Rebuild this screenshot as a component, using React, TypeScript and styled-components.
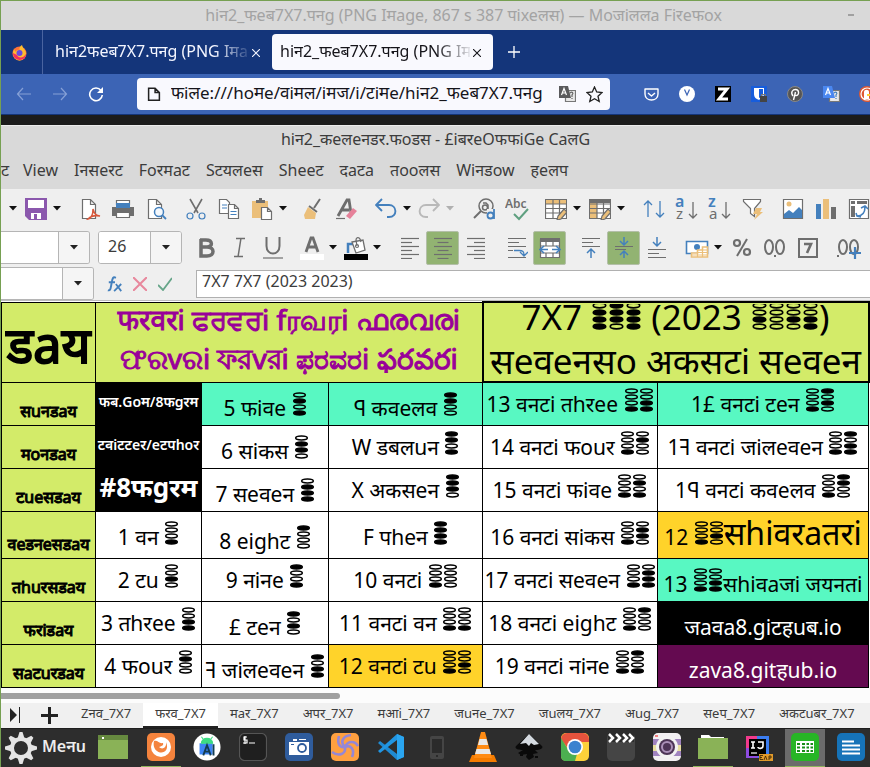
import React from 'react';
import styled, { createGlobalStyle, css } from 'styled-components';

const GlobalStyle = createGlobalStyle`
  * { box-sizing: border-box; }
  body {
    margin: 0;
    background: #2d2d2d;
    font-family: "Noto Sans", "Noto Sans Devanagari", "Open Sans", sans-serif;
    color: #3c3c3c;
  }
  button, input { font-family: inherit; color: inherit; }
  button { border: 0; background: none; padding: 0; margin: 0; }
  svg { display: block; flex: none; }
`;

/* ---------- shared ---------- */

const Desktop = styled.div`
  min-height: 100vh;
  overflow: hidden;
  display: flex;
  flex-direction: column;
  border-left: 1px solid #76a052;
  border-top: 1px solid #76a052;
  white-space: nowrap;
`;

const iconBase = css`
  display: flex;
  align-items: center;
  justify-content: center;
  flex: none;
`;

/* ---------- browser ---------- */

const BrowserTitle = styled.header`
  height: 29px;
  display: grid;
  grid-template-columns: 1fr auto 1fr;
  align-items: center;
  padding: 0 16px 2px 72px;
  background: #d9d9d9;
  color: #a3a3a3;
  font-size: 16px;
`;

const Minimise = styled.button`
  justify-self: end;
  width: 6px;
  height: 2px;
  background: #a0a0a0;
`;

const TabStrip = styled.nav`
  height: 44px;
  display: flex;
  align-items: center;
  background: #14357a;
`;

const HomeTab = styled.button`
  ${iconBase}
  width: 42px;
  height: 44px;
  padding-right: 4px;
  border-right: 1px solid #4a64a0;
`;

const BrowserTab = styled.button<{ $active?: boolean }>`
  flex: none;
  display: flex;
  align-items: center;
  width: ${(p) => (p.$active ? 221 : 229)}px;
  height: 36px;
  padding: 0 12px 2px ${(p) => (p.$active ? 8 : 12)}px;
  border-radius: 4px;
  background: ${(p) => (p.$active ? '#f9f9fe' : 'transparent')};
  color: ${(p) => (p.$active ? '#15141a' : '#f4f6ff')};
  font-size: 16px;
  svg { margin: 4px 0 0 3px; }
`;

const TabLabel = styled.span`
  flex: 1;
  overflow: hidden;
  text-align: left;
  mask-image: linear-gradient(to right, #000 82%, transparent 102%);
`;

const NewTab = styled.button`
  ${iconBase}
  width: 42px;
  height: 36px;
  color: #fff;
`;

const NavBar = styled.div`
  height: 41px;
  display: flex;
  align-items: center;
  background: #3c64b5;
  border-bottom: 1px solid #14357a;
  overflow: hidden;
`;

const NavButton = styled.button<{ $dim?: boolean }>`
  ${iconBase}
  width: 36px;
  height: 32px;
  color: ${(p) => (p.$dim ? '#86a0d6' : '#fff')};
`;

const NavButtons = styled.div`
  display: flex;
  padding-left: 5px;
  width: 136px;
`;

const UrlBox = styled.div`
  flex: 1;
  display: flex;
  align-items: center;
  height: 32px;
  padding: 0 7px 0 10px;
  border-radius: 4px;
  background: #f9f9fe;
  gap: 10px;
`;

const UrlInput = styled.input`
  flex: 1;
  min-width: 0;
  height: 30px;
  padding: 0 0 4px;
  border: 0;
  outline: 0;
  background: transparent;
  color: #15141a;
  font-size: 17px;
`;

const Extensions = styled.div`
  display: flex;
  width: 260px;
  padding-left: 23px;
  overflow: hidden;
`;

const WallpaperStrip = styled.div`
  height: 10px;
  background: #1c1c1c;
`;

/* ---------- office ---------- */

const OfficeHead = styled.header`
  height: 64px;
  background: #d9d9d9;
  border-top: 1px solid #ececec;
`;

const OfficeTitle = styled.h1`
  margin: 0;
  height: 27px;
  line-height: 27px;
  font-size: 16px;
  font-weight: 400;
  text-align: center;
`;

const MenuBar = styled.nav`
  display: flex;
  height: 34px;
  overflow: hidden;
`;

const MenuItem = styled.button<{ $cut?: boolean }>`
  flex: none;
  display: flex;
  justify-content: ${(p) => (p.$cut ? 'flex-end' : 'center')};
  width: ${(p) => (p.$cut ? '11px' : 'auto')};
  padding: 0 ${(p) => (p.$cut ? 6 : 8)}px 0 8px;
  line-height: 34px;
  font-size: 16px;
`;

const ToolArea = styled.section`
  background: #efefef;
  border-bottom: 1px solid #bdbdbd;
`;

const ToolRow = styled.div`
  display: flex;
  align-items: center;
  height: 39px;
  overflow: hidden;
`;

const Tool = styled.button<{ $gap?: number; $on?: boolean }>`
  ${iconBase}
  width: 33px;
  height: 34px;
  margin-left: ${(p) => p.$gap ?? 0}px;
  border: 1px solid ${(p) => (p.$on ? '#b3bfa8' : 'transparent')};
  border-radius: 2px;
  background: ${(p) => (p.$on ? '#92b372' : 'transparent')};
`;

const Drop = styled.button<{ $off?: boolean; $gap?: number }>`
  ${iconBase}
  width: 10px;
  height: 34px;
  margin-left: ${(p) => p.$gap ?? 0}px;
  color: ${(p) => (p.$off ? '#b0b0b0' : '#111')};
`;

const Combo = styled.div<{ $cut?: boolean; $width: number }>`
  flex: none;
  display: flex;
  width: ${(p) => p.$width}px;
  height: 33px;
  margin-right: 8px;
  border: 1px solid #b5b5b5;
  border-left-width: ${(p) => (p.$cut ? 0 : 1)}px;
  border-radius: ${(p) => (p.$cut ? '0 3px 3px 0' : '3px')};
  background: #fff;
  overflow: hidden;
`;

const ComboInput = styled.input`
  flex: 1;
  min-width: 0;
  border: 0;
  outline: 0;
  padding: 0 0 4px 9px;
  font-size: 16px;
`;

const ComboButton = styled.button`
  ${iconBase}
  width: 31px;
  border-left: 1px solid #b5b5b5;
  background: #f5f5f5;
  color: #222;
`;

const FormulaRow = styled.div`
  display: flex;
  align-items: center;
  height: 33px;
`;

const FormulaButton = styled.button`
  ${iconBase}
  width: 25px;
  height: 30px;
`;

const FormulaInput = styled.input`
  flex: 1;
  min-width: 0;
  height: 28px;
  margin-left: 19px;
  padding: 0 5px 5px;
  border: 1px solid #b0b0b0;
  border-right: 0;
  outline: 0;
  font-size: 16px;
  background: #fff;
`;

/* ---------- sheet ---------- */

const SheetArea = styled.main`
  background: #fff;
  padding-right: 1px;
`;

const Sheet = styled.table`
  width: 100%;
  table-layout: fixed;
  border-collapse: collapse;
  color: #000;
  line-height: 30px;
`;

const Row = styled.tr<{ $height: number }>`
  height: ${(p) => p.$height}px;
`;

const fills = {
  lime: ['#d3eb69', '#000'],
  mint: ['#58f8c2', '#000'],
  gold: ['#ffd32a', '#000'],
  black: ['#000', '#fff'],
  plum: ['#640a50', '#fff'],
  white: ['#fff', '#000'],
} as const;
type Fill = keyof typeof fills;

const Cell = styled.td<{ $fill?: Fill; $low?: boolean; $tall?: boolean }>`
  padding: ${(p) => (p.$low ? 8 : 0) + (p.$tall ? 4 : 0)}px 0 0;
  border: 1px solid #000;
  background: ${(p) => fills[p.$fill ?? 'white'][0]};
  color: ${(p) => fills[p.$fill ?? 'white'][1]};
  font-size: 21px;
  text-align: center;
  vertical-align: middle;
  overflow: hidden;
`;

const Big = styled.span`
  font-size: 32px;
`;

const DayHead = styled.th`
  padding: 4px 0 0;
  border: 1px solid #000;
  background: #d3eb69;
  font-size: 50px;
  font-weight: 400;
  line-height: 60px;
  -webkit-text-stroke: 2px currentColor;
`;

const MonthHead = styled.th`
  padding: 0;
  border: 1px solid #000;
  background: #d3eb69;
  color: #990099;
  font-size: 28px;
  font-weight: 400;
  line-height: 39px;
  -webkit-text-stroke: 1px currentColor;
`;

const YearHead = styled.th`
  padding: 0;
  border: 2px solid #000;
  background: #d3eb69;
  font-size: 35px;
  font-weight: 400;
  line-height: 44px;
`;

const TwoLines = styled.div`
  display: flex;
  flex-direction: column;
  justify-content: center;
  align-items: center;
  height: 76px;
  padding-bottom: 6px;
  overflow: hidden;
  span { flex: none; }
`;

const DayName = styled.th<{ $tall?: boolean }>`
  padding: ${(p) => (p.$tall ? 18 : 14)}px 0 0;
  border: 1px solid #000;
  background: #d3eb69;
  font-size: 16px;
  font-weight: 400;
  line-height: 26px;
  -webkit-text-stroke: 1px currentColor;
`;

const Link = styled.td<{ $big?: boolean }>`
  padding: 0 0 4px;
  background: #000;
  color: #fff;
  text-align: center;
  font-weight: ${(p) => (p.$big ? 700 : 600)};
  font-size: ${(p) => (p.$big ? 26 : 14)}px;
  a { color: inherit; text-decoration: none; }
`;

const Dots = styled.svg`
  display: inline-block;
  vertical-align: baseline;
`;

function Bits({ hex, large }: { hex: string; large?: boolean }) {
  const pitch = large ? 17 : 15;
  const step = large ? 7 : 6;
  const w = pitch * hex.length;
  return (
    <Dots width={w} height={step * 4} viewBox={`0 0 ${w} ${step * 4}`}>
      {hex.split('').flatMap((h, c) =>
        [8, 4, 2, 1].map((bit, r) => (
          <ellipse
            key={`${c}-${r}`}
            cx={pitch * c + pitch / 2}
            cy={step * r + step / 2}
            rx={large ? 6.2 : 5.8}
            ry={large ? 2.3 : 1.9}
            fill={parseInt(h, 16) & bit ? 'currentColor' : 'none'}
            stroke="currentColor"
            strokeWidth={large ? 1.7 : 1.5}
          />
        )),
      )}
    </Dots>
  );
}

const ScrollTrack = styled.div`
  height: 15px;
  padding-top: 5px;
  background: #fcfcfc;
`;

const ScrollThumb = styled.div`
  width: 39%;
  height: 6px;
  border-radius: 0 3px 3px 0;
  background: #a0a0a0;
`;

const SheetTabs = styled.nav`
  display: flex;
  height: 25px;
  background: #f0f0f0;
  overflow: hidden;
`;

const SheetTab = styled.button<{ $active?: boolean }>`
  flex: none;
  padding: 0 12px 2px;
  font-size: 13px;
  line-height: 20px;
  background: ${(p) => (p.$active ? '#fff' : 'transparent')};
  border-bottom: 2px solid ${(p) => (p.$active ? '#222' : 'transparent')};
`;

const SheetTool = styled.button<{ $wide?: boolean }>`
  ${iconBase}
  width: ${(p) => (p.$wide ? 40 : 28)}px;
  color: #222;
`;

/* ---------- panel ---------- */

const Panel = styled.footer`
  display: flex;
  flex: 1;
  min-height: 40px;
  background: #2d2d2d;
  border-top: 1px solid #1e1e1e;
  overflow: hidden;
`;

const StartButton = styled.button`
  flex: none;
  display: flex;
  align-items: center;
  width: 92px;
  padding: 0 0 0 4px;
  gap: 5px;
  color: #eee;
  font-size: 16px;
  font-weight: 600;
  span { padding-bottom: 4px; }
`;

const Launcher = styled.button<{ $open?: boolean; $focus?: boolean; $gap?: number }>`
  ${iconBase}
  width: 40px;
  margin-right: ${(p) => p.$gap ?? 6}px;
  border-bottom: 2px solid ${(p) => (p.$open ? '#8fb35c' : 'transparent')};
  background: ${(p) => (p.$focus ? '#6b6b6b' : 'transparent')};
`;

/* ---------- icons ---------- */

const G = '#6e6e6e';
const B = '#4480bd';
const O = '#ebbf7a';

function Svg({ s = 22, vb = 22, children }: { s?: number; vb?: number; children: React.ReactNode }) {
  return (
    <svg width={s} height={s} viewBox={`0 0 ${vb} ${vb}`} fill="none" strokeWidth="1.2" aria-hidden="true">
      {children}
    </svg>
  );
}

const Caret = () => (
  <svg width="8" height="5" viewBox="0 0 8 5" fill="currentColor"><path d="M0 0h8L4 4.4z" /></svg>
);

const Close = () => (
  <svg width="8" height="8" viewBox="0 0 8 8" stroke="currentColor" strokeWidth="1.1"><path d="M0 0l8 8M8 0L0 8" /></svg>
);

const page = 'M3.5 1.5h8l5 5v14h-13zM11.5 1.5v5h5';
const arrowUp = 'M5 19V3M1 7l4-4 4 4';
const down = 'M5 3v16M1 15l4 4 4-4';

const SaveIcon = () => (
  <Svg><path d="M0 0h22v22H4l-4-4z" fill="#8b58ad" /><path d="M3 2h16v8H3zM6 15h10v6H6z" fill="#fff" /><path d="M9 16h3v5H9z" fill="#8b58ad" /></Svg>
);
const PdfIcon = () => (
  <Svg><path d={page} fill="#fff" stroke={G} /><path d="M9 21c4-1 5-6 5-10 1 4 3 7 7 7-5-1-9 0-12 3z" fill="#efefef" stroke="#d8583b" strokeWidth="1.5" /></Svg>
);
const PrintIcon = () => (
  <Svg><path d="M4.500 7V2.500h13V7" fill="#fff" stroke={G} /><path d="M0 9h22v9H0z" fill={G} /><path d="M4 5h14v5H4z" fill={B} /><path d="M4.500 14.500h13v5h-13z" fill="#fff" stroke={G} /></Svg>
);
const PreviewIcon = () => (
  <Svg><path d={page} fill="#fff" stroke={G} /><circle cx="14" cy="14" r="4.500" fill="#f4f8fc" stroke={B} strokeWidth="1.500" /><path d="M17 17l4 4" stroke={B} strokeWidth="1.800" /></Svg>
);
const CutIcon = () => (
  <Svg><path d="M5 1l8 14M17 1L9 15" stroke={G} strokeWidth="1.600" /><circle cx="5" cy="18" r="3" stroke={B} /><circle cx="17" cy="18" r="3" stroke={B} /></Svg>
);
const CopyIcon = () => (
  <Svg><path d="M1.500 1.500h7l3 3v11h-10z" fill="#fff" stroke={G} /><path d="M4 7h5M4 10h5" stroke={B} /><path d="M10.500 6.500h6l4 4v10h-10zM16.500 6.500v4h4" fill="#fff" stroke={G} /><path d="M12.500 13.500h6M12.500 16.500h6" stroke={B} /></Svg>
);
const PasteIcon = () => (
  <Svg><path d="M1 3h16v17H1z" fill={O} /><path d="M5 5V2h3V0h3v2h3v3z" fill={G} /><path d="M10.500 9.500h6l4 4v8h-10zM16.500 9.500v4h4" fill="#fff" stroke={G} /></Svg>
);
const BrushIcon = () => (
  <Svg><path d="M18 1l-6 9M7 8l8 6" stroke={G} strokeWidth="2" /><path d="M6 9l8 6-1 6H3l-1-4z" fill={O} /></Svg>
);
const ClearIcon = () => (
  <Svg><path d="M3 18L12 2h2l2 13M6 12h8" stroke={G} strokeWidth="2.800" /><path d="M1 20.500h9" stroke={G} /><path d="M18 10l4 3-7 8-4-3z" fill="#e6829a" /></Svg>
);
const UndoIcon = ({ off }: { off?: boolean }) => (
  <Svg>
    <path
      d={off ? 'M20 7H8c-8 0-9 12 0 12h2M15 1l6 6-6 6' : 'M2 7h12c8 0 9 12 0 12h-2M7 1L1 7l6 6'}
      stroke={off ? '#b9b9b9' : B}
      strokeWidth="1.900"
    />
  </Svg>
);
const FindIcon = () => (
  <Svg><circle cx="13" cy="8" r="7" stroke={G} strokeWidth="1.500" /><path d="M8 13l-7 7" stroke={G} strokeWidth="2" /><circle cx="12" cy="9.500" r="2.500" stroke={G} strokeWidth="1.500" /><path d="M10 5h3l2 2v5" stroke={G} strokeWidth="1.500" /><path d="M14 11h8v10h-8z" fill="#efefef" /><circle cx="17.500" cy="17.500" r="3" stroke={B} strokeWidth="1.800" /><path d="M21 11v10" stroke={B} strokeWidth="1.800" /></Svg>
);
const SmallText = styled.text`
  font-family: "Noto Sans", sans-serif;
`;
const AbcIcon = () => (
  <Svg s={24} vb={24}><SmallText x="0" y="11" fontSize="12" fontWeight="600" fill={G}>Abc</SmallText><path d="M9 17l5 5 9-10" stroke="#5fa080" strokeWidth="2" /></Svg>
);
const TableIcon = ({ cols }: { cols?: boolean }) => (
  <Svg>
    <path d="M.5 1.500h21v19H.5z" fill="#fff" stroke={G} />
    <path d={cols ? 'M1 5h7v15H1z' : 'M1 2h20v4H1z'} fill={O} />
    {cols && <path d="M0 1h22v4H0z" fill={G} />}
    <path d="M.5 6h21M.5 10.500h21M.5 15h21M8 2v18M14.500 2v18" stroke={G} />
    <path d="M19 11l3 3-6 7-4 1 1-4z" fill={O} stroke={G} />
  </Svg>
);
const SortIcon = () => (
  <Svg><path d={arrowUp} stroke={B} strokeWidth="1.300" /><g transform="translate(12 0)"><path d={down} stroke={B} strokeWidth="1.300" /></g></Svg>
);
const SortAz = ({ a, b }: { a: string; b: string }) => (
  <Svg s={24} vb={24}><SmallText x="0" y="10" fontSize="16" fontWeight="600" fill={B}>{a}</SmallText><SmallText x="1" y="22" fontSize="15" fill={G}>{b}</SmallText><g transform="translate(13 2)"><path d={down} stroke={G} strokeWidth="1.300" /></g></Svg>
);
const FilterIcon = () => (
  <Svg><path d="M1.500 1.500h17v2l-6 7v8l-4-3v-5l-7-7z" fill="#fff" stroke={G} /><path d="M14 10h6l-2 4h3l-9 8 3-6h-4z" fill={O} /></Svg>
);
const ImageIcon = () => (
  <Svg><path d="M1.500 1.500h19v19h-19z" fill="#fff" stroke={G} /><circle cx="7" cy="6" r="2.500" fill={O} /><path d="M2 20v-4l5-4 4 3 6-6 3 3v8z" fill={B} /></Svg>
);
const BarsIcon = () => (
  <Svg><path d="M1 6h5v15H1z" fill={B} /><path d="M8 1h6v20H8z" fill={O} /><path d="M16 9h5v12h-5z" fill={G} /></Svg>
);
const PivotIcon = () => (
  <Svg><path d="M1.500 1.500h19v19h-19z" fill="#fff" stroke={G} /><path d="M3 3h4v3H3zM9 3h10v3H9zM3 8h4v11H3z" fill={G} /><path d="M8 15l1 3 4 1M9 18c6 0 8-4 8-9M13 10l4-2 3 3" stroke={B} strokeWidth="1.600" /></Svg>
);
const LetterIcon = ({ kind }: { kind: 'B' | 'I' | 'U' }) => (
  <Svg>
    {kind === 'B' && <path d="M4 3h6c7 0 7 7 1 7H5h6c8 0 8 9 0 9H5V2" stroke={G} strokeWidth="3.500" />}
    {kind === 'I' && <path d="M7 1.500h9M5 19.500h9M12 1L9 20" stroke={G} strokeWidth="1.500" />}
    {kind === 'U' && <path d="M4.500 0v9c0 10 13 10 13 0V0" stroke={G} strokeWidth="2" />}
    {kind === 'U' && <path d="M1 21h20" stroke={G} />}
  </Svg>
);
const FontColour = () => (
  <Svg s={24} vb={24}><path d="M6 16L11 2h2l5 14M8 11h8" stroke={G} strokeWidth="2.800" /><path d="M0 18h24v6H0z" fill="#fff" /></Svg>
);
const BucketIcon = () => (
  <Svg s={24} vb={24}><path d="M4 17V8h5" stroke={B} strokeWidth="2.500" /><path d="M8 6l11-2 2 10-9 3z" fill="#fff" stroke={G} strokeWidth="1.300" /><path d="M13 10l-1-6c0-3 3-3 4-1l1 3" stroke={G} strokeWidth="1.300" /><circle cx="13" cy="10" r="1.500" stroke={G} /><path d="M0 18h24v6H0z" fill="#000" /></Svg>
);
const LinesIcon = ({ align }: { align: 'l' | 'c' | 'r' }) => {
  const widths = [18, 11, 18, 11, 18, 11];
  return (
    <Svg>
      {widths.map((w, i) => {
        const x = align === 'l' ? 2 : align === 'r' ? 20 - w : 11 - w / 2;
        return <path key={i} d={`M${x} ${1.500 + i * 4}h${w}`} stroke={G} />;
      })}
    </Svg>
  );
};
const WrapIcon = () => (
  <Svg><path d="M2 1.500h18M2 5.500h11M2 9.500h18M2 13.500h5M2 20.500h18" stroke={G} /><path d="M8 13.500h5c4 0 5 1 5 5M14 15l4 4 4-4" stroke={B} strokeWidth="1.300" /></Svg>
);
const MergeIcon = () => (
  <Svg><path d="M1.500 2.500h19v18h-19z" fill="#fff" stroke={G} /><path d="M1 1h20v4H1z" fill={G} /><path d="M1.500 9h19M1.500 16h19M7 5v4M14 5v4M7 16v5M14 16v5" stroke={G} /><path d="M1 12.500h8M5 9l-4 3.500L5 16M21 12.500h-8M17 9l4 3.500-4 3.500" stroke={B} strokeWidth="1.600" /></Svg>
);
const VertIcon = ({ at }: { at: 't' | 'm' | 'b' }) => (
  <Svg>
    {at === 't' && <><path d="M2 1.500h18M2 5.500h11M2 9.500h18" stroke={G} /><path d="M11 21v-9M7 16l4-4 4 4" stroke={B} strokeWidth="1.500" /></>}
    {at === 'm' && <><path d="M2 9.500h18M2 12.500h11" stroke={G} /><path d="M11 0v7M7 4l4 4 4-4M11 21v-6M7 18l4-4 4 4" stroke={B} strokeWidth="1.500" /></>}
    {at === 'b' && <><path d="M2 12.500h18M2 16.500h11M2 20.500h18" stroke={G} /><path d="M11 0v9M7 5l4 4 4-4" stroke={B} strokeWidth="1.500" /></>}
  </Svg>
);
const MoneyIcon = () => (
  <Svg s={24} vb={24}><path d="M1.500 5.500h21v12h-21z" fill="#fff" stroke={B} strokeWidth="1.600" /><circle cx="12" cy="11" r="3" fill={B} /><path d="M6.500 21v-4h6v-3h5v-3h5v10z" fill="#fff" stroke={O} strokeWidth="1.600" /><path d="M12.500 17v4M17.500 14v7M7 19h15M13 16.500h9M18 14h4" stroke={O} /></Svg>
);
const PercentIcon = () => (
  <Svg><circle cx="6" cy="6" r="3" stroke={G} strokeWidth="2.200" /><circle cx="16" cy="15" r="3" stroke={G} strokeWidth="2.200" /><path d="M16 2L6 19" stroke={G} strokeWidth="2" /></Svg>
);
const ZerosIcon = ({ plus }: { plus?: boolean }) => (
  <Svg s={26} vb={26}><ellipse cx="7" cy="12" rx="4" ry="7" stroke={G} strokeWidth="2" /><ellipse cx="18" cy="12" rx="4" ry="7" stroke={G} strokeWidth="2" /><path d={plus ? 'M1 20h2v2H1z' : 'M12 20h2v2h-2z'} fill={G} />{plus && <path d="M13 18h12M19 12v12" stroke={B} strokeWidth="2.200" />}</Svg>
);
const DateIcon = () => (
  <Svg><path d="M2 2h18v18H2z" stroke={G} strokeWidth="2" /><path d="M7 7h7l-4 9" stroke={G} strokeWidth="2.600" /></Svg>
);

const Firefox = () => (
  <Svg s={17} vb={17}><circle cx="8.500" cy="9.500" r="7" fill="#ff7139" /><path d="M3 4c0 2-1 3-1 6a6.500 6.500 0 0 0 13 0c0-4-3-5-4-9-3 2-3 4-2 5-3-1-4 1-4 2-1-1-2-2-2-4z" fill="#ffbd2e" /><path d="M2 9c0 9 13 9 13 1-3 5-8 4-9 1z" fill="#f2305f" /><circle cx="8.500" cy="9" r="3" fill="#6b4be0" /></Svg>
);
const Translate = ({ blue }: { blue?: boolean }) => (
  <Svg s={17} vb={17}><path d="M6.500 4.500h10v11h-10z" fill="#e8e8e8" stroke="#777" /><path d="M0 0h9l3 12H0z" fill={blue ? '#4a87f0' : '#5a5a5c'} /><path d="M2.500 9L5 2.500 7.500 9M3.500 7h3" stroke="#fff" /><path d="M11 7c2-2 4 0 2 2v2M13 12v1" stroke={blue ? B : '#666'} /></Svg>
);

/* ---------- taskbar icon set ---------- */

const Tile = ({ fill, children }: { fill: string; children: React.ReactNode }) => (
  <Svg s={28} vb={28}><rect width="28" height="28" rx="5" fill={fill} />{children}</Svg>
);
const Folder = ({ tab }: { tab?: boolean }) => (
  <Svg s={30} vb={30}>{tab ? <><path d="M3 3h8l2 2h13v4H3z" fill="#fff" /><path d="M0 6h30v21H0z" fill="#8ab257" /></> : <><path d="M0 3h30v24H0z" fill="#8ab257" /><path d="M0 3h30v5H0z" fill="#66893f" /><path d="M4 5h2v2H4z" fill="#fff" /></>}</Svg>
);
const Gear = () => (
  <Svg s={32} vb={32}>
    {[0, 45, 90, 135, 180, 225, 270, 315].map((a) => (
      <path key={a} d="M12 8L14.500 0h3L20 8z" fill="#e4e4e4" transform={`rotate(${a} 16 16)`} />
    ))}
    <circle cx="16" cy="16" r="9" fill="#2d2d2d" stroke="#e4e4e4" strokeWidth="4" />
  </Svg>
);

const launchers: { name: string; icon: React.ReactNode; open?: boolean; focus?: boolean; gap?: number }[] = [
  { name: 'Desktop', gap: 8, icon: <Folder /> },
  { name: 'Firefox', open: true, icon: <Tile fill="#f4833d"><circle cx="14" cy="14" r="10" fill="#fff" /><path d="M7 8c4-1 5 3 9 2 1 3-2 3-4 4 3 3 8 1 7-5 4 9-4 13-9 9-3-2-4-6-3-10z" fill="#f4833d" /></Tile> },
  { name: 'Android Studio', icon: <Svg s={28} vb={30}><circle cx="15" cy="15" r="14.500" fill="#fff" /><path d="M7 11h14v12H7z" fill="#3d85f5" /><path d="M9 11c0-7 12-7 12 0zM9 4l3 4M21 4l-3 4" fill="#3ddc84" stroke="#3ddc84" /><path d="M11 24l4-11 4 11M13 20h4M22 12v12" stroke="#143c50" strokeWidth="2" /></Svg> },
  { name: 'Terminal', icon: <Tile fill="#1f1f1f"><rect x=".5" y=".5" width="27" height="27" rx="5" stroke="#555" /><path d="M8 4H5v3h3v3H4M6 3v8M10 10h6" stroke="#fff" /></Tile> },
  { name: 'Camera', icon: <Tile fill="#2f5c9c"><path d="M4 9h20v13H4zM8 6h4v2H8zM14 6h7v1h-7z" fill="#fff" /><circle cx="17" cy="15" r="4" stroke="#2f5c9c" strokeWidth="1.800" /><path d="M6 11h3v1H6z" fill="#2f5c9c" /></Tile> },
  { name: 'Swirl', icon: <Tile fill="#ffa040"><path d="M14 14c-5-4-3-11 6-12M14 14c6-3 10 3 7 10M14 14c1 7-6 10-13 5M14 14c-6 1-8-4-6-11M14 14c3-7 10-6 13-1" stroke="#9487d6" strokeWidth="2.600" /></Tile> },
  { name: 'Code', icon: <Svg s={28} vb={28}><path d="M20 1l7 3v20l-7 3L1 10l2-2 17 13z" fill="#1f8ad2" /><path d="M20 1v6L3 20l-2-2z" fill="#2196e3" /><path d="M20 1l7 3v20l-7 3z" fill="#2aa5f0" /></Svg> },
  { name: 'Phone', icon: <Svg s={28} vb={28}><rect x="7" y="3" width="14" height="23" rx="2" fill="#454545" /><path d="M9 6h10v14H9z" fill="#2b2b2b" /><circle cx="14" cy="23" r="1" fill="#222" /></Svg> },
  { name: 'Media player', icon: <Svg s={30} vb={30}><path d="M4 23h22l3 7H1z" fill="#f57c00" /><path d="M13 0h4l7 26H6z" fill="#ff8b13" /><path d="M11.500 7h7l1.600 6H10zM8.500 17h13l1.500 5H7z" fill="#e8e8e8" /></Svg> },
  { name: 'Vector drawing', icon: <Svg s={28} vb={28}><path d="M14 1l13 12c2 3-4 4-7 4l3 3-5 1 1 3-5 3-3-3 1-3-6 1-3-2 5-3c-4 0-9-1-7-4z" fill="#0a0a0a" /><path d="M14 1l10 10-5 1-3-2-2 3-3-3-6 1z" fill="#d4dae0" /><path d="M5 22h3M20 24h3" stroke="#0a0a0a" strokeWidth="2" /></Svg> },
  { name: 'Chrome', icon: <Tile fill="#fdd13a"><path d="M0 6a6 6 0 0 1 6-6h16a6 6 0 0 1 6 6v3H14L8 17z" fill="#e5533d" /><path d="M0 5l8 13 8 3-2 7H5c-3 0-5-2-5-5z" fill="#4caf50" /><circle cx="14" cy="14" r="8" fill="#fff" /><circle cx="14" cy="14" r="6.300" fill="#3a82cf" /></Tile> },
  { name: 'Video', icon: <Tile fill="#454545"><path d="M1 0h26v9H1z" fill="#2d2d2d" /><path d="M2 1l4 4-4 4M9 1l4 4-4 4M16 1l4 4-4 4M22 1l4 4-4 4" stroke="#fff" strokeWidth="2.500" /></Tile> },
  { name: 'Photo', icon: <Tile fill="#f2f0f2"><path d="M0 6h28v6H0zM0 18h28v5H0z" fill="#a083bf" /><path d="M0 12h28v6H0z" fill="#e8dfa0" /><circle cx="14" cy="14" r="11" fill="#f3f3f3" /><circle cx="14" cy="14" r="8" fill="#4d3557" /><circle cx="14" cy="14" r="5" stroke="#ab91b9" strokeWidth="2" /><path d="M2 2h3v2H2z" fill="#f08080" /></Tile> },
  { name: 'Files', open: true, icon: <Folder tab /> },
  { name: 'IDE', icon: <Svg s={28} vb={28}><path d="M1 3h12v22H1z" fill="#f13a8c" /><path d="M12 3h12v22H12z" fill="#3b7df0" /><path d="M1 15h12v10H1z" fill="#8f4ce0" /><path d="M4 6h17v17H4z" fill="#000" /><path d="M6 9h4M8 9v6M6 15h4M13 9h5v4c0 3-5 3-5 1" stroke="#fff" strokeWidth="1.600" /><path d="M6 20h6" stroke="#fff" /><path d="M14 21h14v7H14z" fill="#e09a2b" /><path d="M18 22.500h-3v4h3M15 24.500h2M19 27l1.500-4 1.500 4M24 27v-4h2v2h-2" stroke="#2d1c00" strokeWidth=".8" /></Svg> },
  { name: 'Calc', open: true, focus: true, icon: <Tile fill="#27b526"><path d="M5 8h18v12H5z" fill="#fff" /><path d="M6 10h3v2H6zM11 10h3v2h-3zM15.500 10h2.500v2h-2.500zM19.500 10h2.500v2h-2.500zM6 13.500h3v2H6zM11 13.500h3v2h-3zM15.500 13.500h2.500v2h-2.500zM19.500 13.500h2.500v2h-2.500zM6 17h3v2H6zM11 17h3v2h-3zM15.500 17h2.500v2h-2.500zM19.500 17h2.500v2h-2.500z" fill="#188d18" /></Tile> },
  { name: 'Writer', icon: <Tile fill="#1673b8"><path d="M5 8.500h12M5 12.500h18M5 16.500h18M5 20.500h18" stroke="#fff" strokeWidth="1.800" /></Tile> },
];

/* ---------- data ---------- */

type Entry = { n: string; hex?: string; after?: string; big?: boolean; fill?: Fill; low?: boolean };

const days = ['सuनडaय', 'मoनडaय', 'टueसडaय', 'वeडनeसडaय', 'तhuरसडaय', 'फरiडaय', 'सaटuरडaय'];
const heights = [43, 43, 43, 47, 43, 43, 43];

const weeks: Entry[][] = [
  [
    { n: '5 फiवe', hex: '5', fill: 'mint', low: true },
    { n: 'ꟼ कवeलव', hex: 'C', fill: 'mint', low: true },
    { n: '13 वनटi तhरee', hex: '13', fill: 'mint' },
    { n: '1£ वनटi टeन', hex: '1A', fill: 'mint' },
  ],
  [
    { n: '6 सiकस', hex: '6', low: true },
    { n: 'W डबलuन', hex: 'D' },
    { n: '14 वनटi फouर', hex: '14' },
    { n: '1ꟻ वनटi जiलeवeन', hex: '1B' },
  ],
  [
    { n: '7 सeवeन', hex: '7', low: true },
    { n: 'X अकसeन', hex: 'E' },
    { n: '15 वनटi फiवe', hex: '15' },
    { n: '1ꟼ वनटi कवeलव', hex: '1C' },
  ],
  [
    { n: '1 वन', hex: '1' },
    { n: '8 eighट', hex: '8', low: true },
    { n: 'F पheन', hex: 'F' },
    { n: '16 वनटi सiकस', hex: '16' },
    { n: '12', hex: '12', after: 'सhiवरaतरi', big: true, fill: 'gold' },
  ],
  [
    { n: '2 टu', hex: '2' },
    { n: '9 नiनe', hex: '9' },
    { n: '10 वनटi', hex: '10' },
    { n: '17 वनटi सeवeन', hex: '17' },
    { n: '13', hex: '13', after: 'सhiवaजi जयनतi', fill: 'mint', low: true },
  ],
  [
    { n: '3 तhरee', hex: '3' },
    { n: '£ टeन', hex: 'A', low: true },
    { n: '11 वनटi वन', hex: '11' },
    { n: '18 वनटi eighट', hex: '18' },
    { n: 'जaवa8.giटहuब.io', fill: 'black', low: true },
  ],
  [
    { n: '4 फouर', hex: '4' },
    { n: 'ꟻ जiलeवeन', hex: 'B', low: true },
    { n: '12 वनटi टu', hex: '12', fill: 'gold' },
    { n: '19 वनटi नiनe', hex: '19' },
    { n: 'zava8.gitहub.io', fill: 'plum', low: true },
  ],
];

const links = ['फब.Goम/8फgरम', 'टवiटटeर/eटपhoर', '#8फgरम'];
const menus = ['ट', 'View', 'Iनसeरट', 'Foरमaट', 'Sटयलeस', 'Sheeट', 'दaटa', 'तooलस', 'Wiनडow', 'हeलप'];
const sheets = ['Zनव', 'फरव', 'मaर', 'अपर', 'मआi', 'जuनe', 'जuलय', 'अug', 'सeप', 'अकटuबर'];

export default function App() {
  return (
    <>
      <GlobalStyle />
      <Desktop>
        <BrowserTitle>
          <span />
          <span>hiन2_फeब7X7.पनg (PNG Iमage, 867 s 387 पixeलस) — Moजiललa Fiरeफox</span>
          <Minimise aria-label="Minimise" />
        </BrowserTitle>
        <TabStrip>
          <HomeTab aria-label="Firefox view"><Firefox /></HomeTab>
          <BrowserTab><TabLabel>hiन2फeब7X7.पनg (PNG Iमage)</TabLabel><Close /></BrowserTab>
          <BrowserTab $active><TabLabel>hiन2_फeब7X7.पनg (PNG Iमage)</TabLabel><Close /></BrowserTab>
          <NewTab aria-label="New tab"><svg width="12" height="12" viewBox="0 0 12 12" stroke="currentColor" strokeWidth="1.300"><path d="M6 0v12M0 6h12" /></svg></NewTab>
        </TabStrip>
        <NavBar>
          <NavButtons>
            <NavButton $dim aria-label="Back"><Svg s={16} vb={16}><path d="M15 8H1.500M7 2L1.500 8 7 14" stroke="currentColor" /></Svg></NavButton>
            <NavButton $dim aria-label="Forward"><Svg s={16} vb={16}><path d="M1 8h13.500M9 2l5.500 6L9 14" stroke="currentColor" /></Svg></NavButton>
            <NavButton aria-label="Reload"><Svg s={16} vb={16}><path d="M13 4.500A6.300 6.300 0 1 0 14.300 9" stroke="currentColor" strokeWidth="1.600" /><path d="M15 1v6H9z" fill="currentColor" /></Svg></NavButton>
          </NavButtons>
          <UrlBox>
            <Svg s={14} vb={13}><path d="M1.500 1.200h6l4 4v7h-10zM7.500 1v4h4" stroke="#222" strokeWidth="1.400" /></Svg>
            <UrlInput aria-label="Address" defaultValue="फiलe:///hoमe/वiमल/iमज/i/टiमe/hiन2_फeब7X7.पनg" />
            <Translate />
            <Svg s={17} vb={17}><path d="M8.500 1l2.200 5 5.300.5-4 3.700 1.200 5.300-4.700-2.800-4.700 2.800L5 10.200 1 6.500 6.300 6z" stroke="#222" strokeWidth="1.300" /></Svg>
          </UrlBox>
          <Extensions>
            <NavButton aria-label="Pocket"><Svg s={15} vb={15}><path d="M1 2h13v5c0 8-13 8-13 0zM4 6l3.500 3L11 6" stroke="#fff" strokeWidth="1.400" strokeLinejoin="round" /></Svg></NavButton>
            <NavButton aria-label="V"><Svg s={16} vb={16}><circle cx="8" cy="8" r="8" fill="#fff" /><path d="M5.500 3.500L8 9l2.500-5.500" stroke="#3c64b5" /></Svg></NavButton>
            <NavButton aria-label="Z"><Svg s={16} vb={16}><path d="M0 0h16v16H0z" fill="#000" /><path d="M3 3h9L4 13h9" stroke="#fff" strokeWidth="3" /></Svg></NavButton>
            <NavButton aria-label="Passwords"><Svg s={16} vb={16}><path d="M0 0h16v16H0z" fill="#175ddc" /><path d="M3 2h10v6c0 4-4 5-5 6-2-1-5-2-5-6z" fill="#fff" /><path d="M8 3h4v5c0 2-2 3-4 4z" fill="#175ddc" /><path d="M9 10h7v6H9z" fill="#444" /><path d="M10.500 10V8.500h4V10" stroke="#777" /></Svg></NavButton>
            <NavButton aria-label="Pinterest"><Svg s={16} vb={16}><circle cx="8" cy="8" r="7.500" fill="#555" stroke="#888" strokeWidth="1" /><path d="M6 10C3 6 6 3.500 8.500 3.500c4 0 4 6 .5 6-1 0-1.500-.5-1.500-.5M8.500 6L6.500 14" stroke="#fff" strokeWidth="1.400" /></Svg></NavButton>
            <NavButton aria-label="Translate"><Translate blue /></NavButton>
            <NavButton aria-label="Search"><Svg s={16} vb={16}><circle cx="8" cy="8" r="8" fill="#de5833" /><circle cx="8" cy="8" r="6" stroke="#fff" /><path d="M5 13V6c0-3 5-3 5 0v7z" fill="#fff" /><path d="M8 8h4v2H8z" fill="#fc3" /></Svg></NavButton>
          </Extensions>
        </NavBar>
        <WallpaperStrip />

        <OfficeHead>
          <OfficeTitle>hiन2_कeलeनडर.फoडस - £iबरeOफफiGe CaलG</OfficeTitle>
          <MenuBar>
            {menus.map((m, i) => <MenuItem key={m} $cut={i === 0}>{m}</MenuItem>)}
          </MenuBar>
        </OfficeHead>

        <ToolArea>
          <ToolRow>
            <Drop $gap={7} aria-label="Open recent"><Caret /></Drop>
            <Tool $gap={1} aria-label="Save"><SaveIcon /></Tool><Drop aria-label="Save options"><Caret /></Drop>
            <Tool $gap={11} aria-label="Export PDF"><PdfIcon /></Tool>
            <Tool aria-label="Print"><PrintIcon /></Tool>
            <Tool aria-label="Preview"><PreviewIcon /></Tool>
            <Tool $gap={7} aria-label="Cut"><CutIcon /></Tool>
            <Tool aria-label="Copy"><CopyIcon /></Tool>
            <Tool aria-label="Paste"><PasteIcon /></Tool><Drop aria-label="Paste options"><Caret /></Drop>
            <Tool $gap={8} aria-label="Clone formatting"><BrushIcon /></Tool>
            <Tool aria-label="Clear formatting"><ClearIcon /></Tool>
            <Tool $gap={7} aria-label="Undo"><UndoIcon /></Tool><Drop aria-label="Undo list"><Caret /></Drop>
            <Tool aria-label="Redo"><UndoIcon off /></Tool><Drop $off aria-label="Redo list"><Caret /></Drop>
            <Tool $gap={12} aria-label="Find"><FindIcon /></Tool>
            <Tool aria-label="Spelling"><AbcIcon /></Tool>
            <Tool $gap={6} aria-label="Rows"><TableIcon /></Tool><Drop aria-label="Row options"><Caret /></Drop>
            <Tool $gap={1} aria-label="Columns"><TableIcon cols /></Tool><Drop aria-label="Column options"><Caret /></Drop>
            <Tool $gap={11} aria-label="Sort"><SortIcon /></Tool>
            <Tool aria-label="Sort ascending"><SortAz a="a" b="z" /></Tool>
            <Tool aria-label="Sort descending"><SortAz a="z" b="a" /></Tool>
            <Tool aria-label="Filter"><FilterIcon /></Tool>
            <Tool $gap={7} aria-label="Image"><ImageIcon /></Tool>
            <Tool aria-label="Chart"><BarsIcon /></Tool>
            <Tool aria-label="Pivot table"><PivotIcon /></Tool>
          </ToolRow>
          <ToolRow>
            <Combo $cut $width={89}><ComboInput aria-label="Font name" /><ComboButton aria-label="Choose font"><Caret /></ComboButton></Combo>
            <Combo $width={84}><ComboInput aria-label="Font size" defaultValue="26" /><ComboButton aria-label="Choose size"><Caret /></ComboButton></Combo>
            <Tool aria-label="Bold"><LetterIcon kind="B" /></Tool>
            <Tool aria-label="Italic"><LetterIcon kind="I" /></Tool>
            <Tool aria-label="Underline"><LetterIcon kind="U" /></Tool>
            <Tool $gap={6} aria-label="Font colour"><FontColour /></Tool><Drop aria-label="Font colours"><Caret /></Drop>
            <Tool $gap={1} aria-label="Fill colour"><BucketIcon /></Tool><Drop aria-label="Fill colours"><Caret /></Drop>
            <Tool $gap={11} aria-label="Align left"><LinesIcon align="l" /></Tool>
            <Tool $on aria-label="Align centre"><LinesIcon align="c" /></Tool>
            <Tool aria-label="Align right"><LinesIcon align="r" /></Tool>
            <Tool $gap={8} aria-label="Wrap text"><WrapIcon /></Tool>
            <Tool $on aria-label="Merge cells"><MergeIcon /></Tool>
            <Tool $gap={8} aria-label="Align top"><VertIcon at="t" /></Tool>
            <Tool $on aria-label="Centre vertically"><VertIcon at="m" /></Tool>
            <Tool aria-label="Align bottom"><VertIcon at="b" /></Tool>
            <Tool $gap={7} aria-label="Currency"><MoneyIcon /></Tool><Drop aria-label="Currencies"><Caret /></Drop>
            <Tool $gap={2} aria-label="Percent"><PercentIcon /></Tool>
            <Tool aria-label="Number"><ZerosIcon /></Tool>
            <Tool aria-label="Date"><DateIcon /></Tool>
            <Tool $gap={8} aria-label="Add decimal"><ZerosIcon plus /></Tool>
          </ToolRow>
          <FormulaRow>
            <Combo $cut $width={93}><ComboInput aria-label="Name box" /><ComboButton aria-label="Names"><Caret /></ComboButton></Combo>
            <FormulaButton aria-label="Function"><Svg s={16} vb={18}><path d="M10 2C6 0 6 4 5 9s-1 8-4 7M2 7h7" stroke={B} strokeWidth="2.200" /><path d="M10 9l6 8M16 9l-8 8" stroke={B} strokeWidth="2" /></Svg></FormulaButton>
            <FormulaButton aria-label="Cancel"><Svg s={14} vb={14}><path d="M0 0l14 14M14 0L0 14" stroke="#e8879c" strokeWidth="2" /></Svg></FormulaButton>
            <FormulaButton aria-label="Accept"><Svg s={14} vb={14}><path d="M0 8l5 5L14 1" stroke="#66a589" strokeWidth="1.800" /></Svg></FormulaButton>
            <FormulaInput aria-label="Formula" defaultValue="7X7 7X7 (2023 2023)" />
          </FormulaRow>
        </ToolArea>

        <SheetArea>
          <Sheet>
            <colgroup>
              <col width="94" /><col width="106" /><col width="127" /><col width="154" /><col width="175" /><col width="211" />
            </colgroup>
            <thead>
              <Row $height={80}>
                <DayHead scope="col">डaय</DayHead>
                <MonthHead colSpan={3} scope="colgroup">
                  <TwoLines>
                    <span>फरवरi ਫਰਵਰi fரவரi ഫരവരi</span>
                    <span>ଫରvରi ফরvরi ಫರವರi ఫరవరi</span>
                  </TwoLines>
                </MonthHead>
                <YearHead colSpan={2} scope="colgroup">
                  <TwoLines>
                    <span>7X7 <Bits hex="7E7" large /> (2023 <Bits hex="2023" large />)</span>
                    <span>सeवeनसo अकसटi सeवeन</span>
                  </TwoLines>
                </YearHead>
              </Row>
            </thead>
            <tbody>
              {weeks.map((row, r) => (
                <Row key={days[r]} $height={heights[r]}>
                  <DayName scope="row" $tall={heights[r] > 43}>{days[r]}</DayName>
                  {r < 3 && <Link $big={r === 2}><a href="#8">{links[r]}</a></Link>}
                  {row.map((e) => (
                    <Cell key={e.n} $fill={e.fill} $low={e.low} $tall={heights[r] > 43 && !e.big}>
                      {e.n}
                      {e.hex && <> <Bits hex={e.hex} /></>}
                      {e.big ? <Big>{e.after}</Big> : e.after}
                    </Cell>
                  ))}
                </Row>
              ))}
            </tbody>
          </Sheet>
        </SheetArea>
        <ScrollTrack><ScrollThumb /></ScrollTrack>
        <SheetTabs>
          <SheetTool aria-label="Last sheet"><svg width="11" height="16" viewBox="0 0 11 16"><path d="M0 1l7 7-7 7zM9 0h1v16H9z" fill="currentColor" /></svg></SheetTool>
          <SheetTool $wide aria-label="Add sheet"><svg width="17" height="17" viewBox="0 0 17 17" stroke="currentColor" strokeWidth="3"><path d="M8.500 0v17M0 8.500h17" /></svg></SheetTool>
          {sheets.map((s, i) => <SheetTab key={s} $active={i === 1}>{s}_7X7</SheetTab>)}
        </SheetTabs>

        <Panel>
          <StartButton><Gear /><span>Meनu</span></StartButton>
          {launchers.map((l) => (
            <Launcher key={l.name} aria-label={l.name} $open={l.open} $focus={l.focus} $gap={l.gap}>{l.icon}</Launcher>
          ))}
        </Panel>
      </Desktop>
    </>
  );
}
